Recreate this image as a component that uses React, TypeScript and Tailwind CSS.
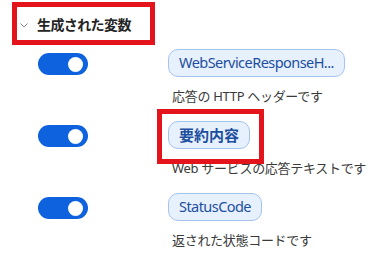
const jp = "font-['Noto_Sans','Noto_Sans_CJK_JP',sans-serif]";

type Row = { name: string; desc: string; bold?: boolean; marked?: boolean };

const rows: Row[] = [
  { name: "WebServiceResponseH...", desc: "応答の HTTP ヘッダーです" },
  { name: "要約内容", desc: "Web サービスの応答テキストです", bold: true, marked: true },
  { name: "StatusCode", desc: "返された状態コードです" },
];

const Toggle = () => (
  <div className="flex h-[22px] w-[50px] items-center justify-end rounded-full bg-[#0f62de] pr-[5px]">
    <div className="h-[15px] w-[15px] rounded-full bg-white" />
  </div>
);

const App = () => {
  return (
    <div className={`relative h-[265px] w-[390px] overflow-hidden bg-white text-[#242424] ${jp}`}>
      <div className="flex h-[49px] items-center pl-[19px]">
        <svg width="10" height="10" viewBox="0 0 10 10" className="mr-[8px] mt-[1px]">
          <path d="M1.5 3.5 L5 7 L8.5 3.5" fill="none" stroke="#8a8a8a" strokeWidth="1" />
        </svg>
        <span className="text-[14px] font-bold tracking-[-0.6px]">生成された変数</span>
      </div>
      <div className="absolute left-[12px] top-[2px] h-[43px] w-[143px] border-[5px] border-[#e3141c]" />

      <div className="flex flex-col gap-[15px]">
        {rows.map((r) => (
          <div key={r.name} className="flex pl-[38px]">
            <div className="mr-[80px] flex h-[28px] items-center pt-[2px]">
              <Toggle />
            </div>
            <div className="flex flex-col items-start">
              <div className="relative">
                <div
                  className={`flex h-[28px] items-center rounded-[10px] border border-[#a6c3ee] bg-[#e7f0fd] px-[10px] text-[#1c4f9f] ${
                    r.bold ? "text-[15px] font-bold" : "text-[14.5px] tracking-[-0.55px]"
                  }`}
                >
                  {r.name}
                </div>
                {r.marked && (
                  <div className="absolute -left-[11px] -right-[14px] -top-[12px] -bottom-[15px] border-[5px] border-[#e3141c]" />
                )}
              </div>
              <div className="mt-[9px] pl-[4px] text-[13px] leading-[20px] tracking-[-0.3px] text-[#3a3a3a] whitespace-nowrap">
                {r.desc}
              </div>
            </div>
          </div>
        ))}
      </div>
    </div>
  );
};

export default App;
